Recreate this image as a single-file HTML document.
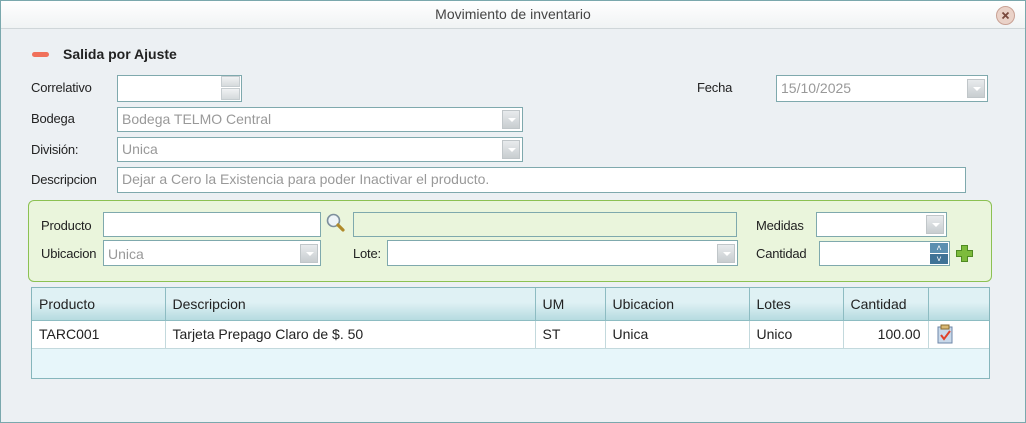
<!DOCTYPE html><html><head><style>
*{box-sizing:border-box;margin:0;padding:0}
body{width:1026px;height:423px;background:#ecf0f3;font-family:"Liberation Sans",sans-serif;font-size:13px;color:#222;position:relative;overflow:hidden}
.a{position:absolute}
.frame{left:0;top:0;width:1026px;height:423px;border:1px solid #7aa8ad}
.title{left:1px;top:1px;width:1024px;height:28px;background:linear-gradient(#fff,#f0f3f4);border-bottom:1px solid #cfd6d9;text-align:center;line-height:27px;font-size:14px;color:#444}
.lbl{font-size:13px;color:#222;line-height:16px;letter-spacing:-0.2px}
.in{background:#fff;border:1px solid #7fa9ad}
.dis{color:#999;font-size:14px;padding-left:4px;line-height:22px}
.dd{position:absolute;right:2px;top:3px;width:18px;height:19px;background:linear-gradient(#e8ebed,#c8cdd0);border:1px solid #c0c6c9}
.dd:after{content:"";position:absolute;left:5px;top:7px;border-left:4px solid transparent;border-right:4px solid transparent;border-top:4px solid #fff}
table{border-collapse:collapse;font-size:14px}
th{font-weight:normal;text-align:left;padding-left:7px;height:32px;background:linear-gradient(#dff1f4 0%,#dff1f4 45%,#b6dbe0 100%);border-right:1px solid #8dbcc2;border-bottom:1px solid #8dbcc2}
td{height:28px;padding-left:7px;background:#fff;border-right:1px solid #c3d9dd;border-bottom:1px solid #c3d9dd}
</style></head><body>
<div class="a frame"></div>
<div class="a title">Movimiento de inventario</div>
<svg class="a" style="left:995px;top:5px" width="21" height="21" viewBox="0 0 21 21"><circle cx="10.5" cy="10.5" r="9" fill="#ead2c8" stroke="#c9a194"/><path d="M7.5 7.5l6 6M13.5 7.5l-6 6" stroke="#7a4a3e" stroke-width="1.8"/></svg>
<div class="a" style="left:32px;top:52px;width:17px;height:5px;border-radius:3px;background:#f0705a"></div>
<div class="a" style="left:63px;top:46px;font-weight:bold;font-size:14px">Salida por Ajuste</div>

<div class="a lbl" style="left:31px;top:80px">Correlativo</div>
<div class="a in" style="left:117px;top:75px;width:125px;height:27px"></div>
<div class="a" style="left:221px;top:76px;width:19px;height:11px;background:linear-gradient(#f0f2f3,#d5dadc);border:1px solid #c6cdd0"></div>
<div class="a" style="left:221px;top:88px;width:19px;height:12px;background:linear-gradient(#f0f2f3,#d5dadc);border:1px solid #c6cdd0"></div>
<div class="a lbl" style="left:697px;top:80px">Fecha</div>
<div class="a in dis" style="left:776px;top:75px;width:212px;height:27px;line-height:25px">15/10/2025<div class="dd"></div></div>

<div class="a lbl" style="left:31px;top:111px">Bodega</div>
<div class="a in dis" style="left:117px;top:107px;width:406px;height:25px">Bodega TELMO Central<div class="dd" style="top:2px"></div></div>
<div class="a lbl" style="left:31px;top:142px">División:</div>
<div class="a in dis" style="left:117px;top:137px;width:406px;height:25px">Unica<div class="dd" style="top:2px"></div></div>
<div class="a lbl" style="left:31px;top:172px">Descripcion</div>
<div class="a in dis" style="left:117px;top:167px;width:849px;height:26px">Dejar a Cero la Existencia para poder Inactivar el producto.</div>

<div class="a" style="left:28px;top:200px;width:964px;height:82px;background:#eaf5dc;border:1px solid #8cc152;border-radius:6px"></div>
<div class="a lbl" style="left:41px;top:218px">Producto</div>
<div class="a in" style="left:103px;top:212px;width:218px;height:25px"></div>
<svg class="a" style="left:325px;top:212px" width="22" height="22" viewBox="0 0 22 22"><circle cx="8.5" cy="8.5" r="6" fill="#eef4f8" stroke="#7d8f9c" stroke-width="1.6"/><path d="M13 13l5 5" stroke="#b08a2a" stroke-width="3.2" stroke-linecap="round"/></svg>
<div class="a" style="left:353px;top:212px;width:384px;height:25px;border:1px solid #7fa9ad;background:#eaf5dc"></div>
<div class="a lbl" style="left:41px;top:246px">Ubicacion</div>
<div class="a in dis" style="left:103px;top:240px;width:218px;height:26px;line-height:26px">Unica<div class="dd"></div></div>
<div class="a lbl" style="left:353px;top:246px">Lote:</div>
<div class="a in" style="left:387px;top:240px;width:351px;height:26px"><div class="dd"></div></div>
<div class="a lbl" style="left:756px;top:218px">Medidas</div>
<div class="a in" style="left:816px;top:212px;width:131px;height:25px"><div class="dd" style="top:2px"></div></div>
<div class="a lbl" style="left:756px;top:246px">Cantidad</div>
<div class="a in" style="left:819px;top:241px;width:131px;height:25px"></div>
<div class="a" style="left:930px;top:243px;width:18px;height:10px;background:#5b8fb0;color:#fff;font-size:9px;text-align:center;line-height:10px">&#708;</div>
<div class="a" style="left:930px;top:254px;width:18px;height:10px;background:#3f7296;color:#fff;font-size:9px;text-align:center;line-height:10px">&#709;</div>
<svg class="a" style="left:955px;top:244px" width="19" height="19" viewBox="0 0 19 19"><path d="M6.5 1.5h6v5h5v6h-5v5h-6v-5h-5v-6h5z" fill="#7dbb3c" stroke="#4f8a22" stroke-width="1"/></svg>

<div class="a" style="left:31px;top:287px;width:959px;height:92px;border:1px solid #86b6bc;background:#e7f6fa">
<table style="width:957px">
<tr><th style="width:133px">Producto</th><th style="width:370px">Descripcion</th><th style="width:70px">UM</th><th style="width:144px">Ubicacion</th><th style="width:94px">Lotes</th><th style="width:85px">Cantidad</th><th style="border-right:none"></th></tr>
<tr><td>TARC001</td><td>Tarjeta Prepago Claro de $. 50</td><td>ST</td><td>Unica</td><td>Unico</td><td style="text-align:right;padding-right:7px">100.00</td><td style="border-right:none"><svg width="18" height="20" viewBox="0 0 18 20" style="vertical-align:middle"><rect x="2" y="3" width="14" height="16" fill="#c9d9ea" stroke="#6d86a8"/><rect x="5" y="1" width="8" height="4" fill="#d8b873" stroke="#8b6c30"/><path d="M5 11l3 4 6-8" stroke="#e0412a" stroke-width="2" fill="none"/></svg></td></tr>
</table></div>
</body></html>
